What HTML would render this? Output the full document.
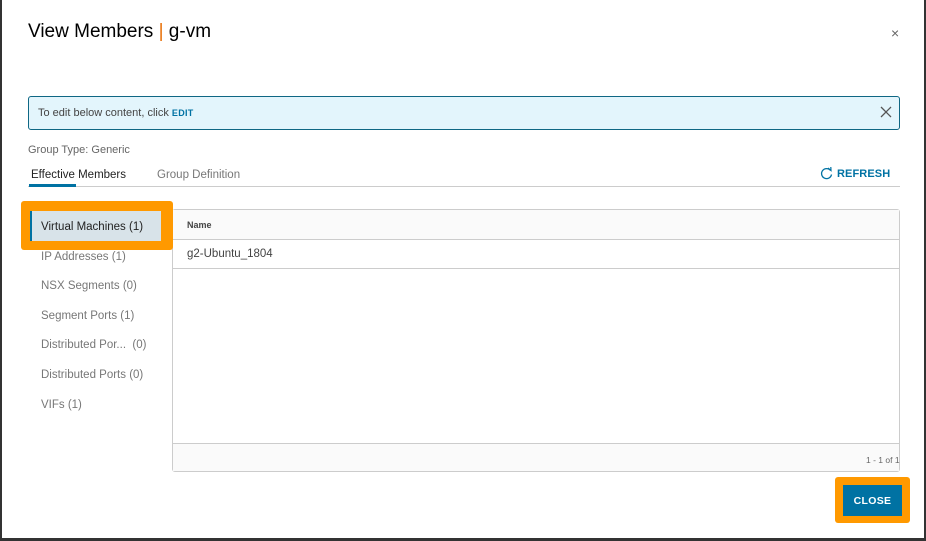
<!DOCTYPE html>
<html><head><style>
*{box-sizing:border-box;margin:0;padding:0}
body{width:926px;height:541px;background:#333;font-family:"Liberation Sans",sans-serif;position:relative;overflow:hidden}
.panel{position:absolute;left:2px;top:0;width:922px;height:538px;background:#fff}
.a{position:absolute}
.n{font-size:11.5px;color:#777}
</style></head><body>
<div class="panel"></div>
<div class="a" style="left:28px;top:21px;font-size:19px;color:#000">View Members <span style="color:#e8710a">|</span> g-vm</div>
<div class="a" style="left:891px;top:25px;font-size:14px;color:#666">×</div>
<div class="a" style="left:28px;top:96px;width:872px;height:34px;background:#e3f5fc;border:1px solid #0f6784;border-radius:3px"></div>
<div class="a" style="left:38px;top:107px;font-size:11px;color:#444">To edit below content, click <b style="color:#0072a3;font-size:9px;letter-spacing:.3px">EDIT</b></div>
<svg class="a" style="left:880px;top:106px" width="12" height="12"><path d="M1 1L11 11M11 1L1 11" stroke="#555" stroke-width="1.3"/></svg>
<div class="a" style="left:28px;top:144px;font-size:11px;color:#666">Group Type: Generic</div>
<div class="a" style="left:31px;top:169px;font-size:11.5px;color:#222">Effective Members</div>
<div class="a" style="left:157px;top:169px;font-size:11.5px;color:#777">Group Definition</div>
<div class="a" style="left:28px;top:186px;width:872px;height:1px;background:#ccc"></div>
<div class="a" style="left:29px;top:184px;width:47px;height:3px;background:#0072a3"></div>
<svg class="a" style="left:820px;top:167px" width="13" height="13"><path d="M10.5 3.5A5 5 0 1 0 11.5 7.5" fill="none" stroke="#0072a3" stroke-width="1.3"/><path d="M8 1L11 3.5L10.8 0" fill="none" stroke="#0072a3" stroke-width="1.2"/></svg>
<div class="a" style="left:837px;top:168px;font-size:11px;font-weight:bold;color:#0072a3;letter-spacing:.1px">REFRESH</div>
<div class="a" style="left:172px;top:209px;width:728px;height:263px;border:1px solid #ccc;border-radius:3px;background:#fff"></div>
<div class="a" style="left:173px;top:210px;width:726px;height:30px;background:#fafafa;border-bottom:1px solid #ccc"></div>
<div class="a" style="left:187px;top:220px;font-size:9px;font-weight:bold;color:#444">Name</div>
<div class="a" style="left:173px;top:268px;width:726px;height:1px;background:#ccc"></div>
<div class="a" style="left:187px;top:248px;font-size:11.5px;color:#444">g2-Ubuntu_1804</div>
<div class="a" style="left:173px;top:443px;width:726px;height:28px;background:#fafafa;border-top:1px solid #ccc"></div>
<div class="a" style="left:866px;top:455px;font-size:8.5px;color:#666">1 - 1 of 1</div>
<div class="a" style="left:21px;top:201px;width:152px;height:49px;background:#ff9900;border-radius:3px"></div>
<div class="a" style="left:30px;top:211px;width:131px;height:30px;background:#d8e3e9;border-left:2px solid #0072a3"></div>
<div class="a" style="left:41px;top:221px;font-size:11.5px;color:#222">Virtual Machines (1)</div>
<div class="a n" style="left:41px;top:251px">IP Addresses (1)</div>
<div class="a n" style="left:41px;top:280px">NSX Segments (0)</div>
<div class="a n" style="left:41px;top:310px">Segment Ports (1)</div>
<div class="a n" style="left:41px;top:339px">Distributed Por...&nbsp; (0)</div>
<div class="a n" style="left:41px;top:369px">Distributed Ports (0)</div>
<div class="a n" style="left:41px;top:399px">VIFs (1)</div>
<div class="a" style="left:835px;top:477px;width:75px;height:46px;background:#ff9900;border-radius:3px"></div>
<div class="a" style="left:843px;top:485px;width:59px;height:31px;background:#0072a3;color:#fff;font-size:10.5px;font-weight:bold;letter-spacing:.3px;text-align:center;line-height:33px">CLOSE</div>
</body></html>
